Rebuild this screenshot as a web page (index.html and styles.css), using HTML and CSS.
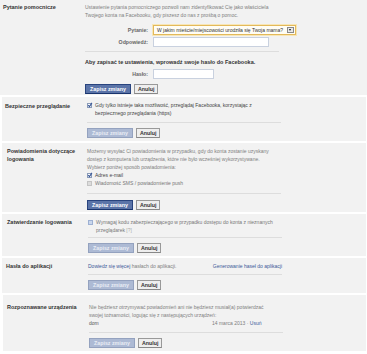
FILE: index.html
```html
<!DOCTYPE html>
<html lang="pl">
<head>
<meta charset="utf-8">
<title>Zabezpieczenia</title>
<link rel="stylesheet" href="styles.css">
</head>
<body>
<div class="page">

  <section class="block b1">
    <div class="title">Pytanie pomocnicze</div>
    <div class="content">
      <p class="desc">Ustawienie pytania pomocniczego pozwoli nam zidentyfikować Cię jako właściciela Twojego konta na Facebooku, gdy piszesz do nas z prośbą o pomoc.</p>
      <div class="form-row r-select">
        <span class="flabel">Pytanie:</span>
        <span class="select">W jakim mieście/miejscowości urodziła się Twoja mama?<span class="arrow"></span></span>
      </div>
      <div class="form-row r-answer">
        <span class="flabel">Odpowiedź:</span>
        <span class="input w-answer"></span>
      </div>
      <div class="sep s-first"></div>
      <p class="notice">Aby zapisać te ustawienia, wprowadź swoje hasło do Facebooka.</p>
      <div class="form-row r-pass">
        <span class="flabel">Hasło:</span>
        <span class="input w-pass"></span>
      </div>
      <div class="buttons">
        <span class="btn primary">Zapisz zmiany</span>
        <span class="btn cancel">Anuluj</span>
      </div>
    </div>
  </section>

  <section class="block b2">
    <div class="title">Bezpieczne przeglądanie</div>
    <div class="content">
      <div class="check">
        <span class="box checked"><svg viewBox="0 0 6 6" width="6" height="6"><path d="M1.2 3.1 L2.5 4.6 L4.9 0.9" fill="none" stroke="#3b5998" stroke-width="1.1"/></svg></span>
        <span class="ctext dark">Gdy tylko istnieje taka możliwość, przeglądaj Facebooka, korzystając z bezpiecznego przeglądania (https)</span>
      </div>
      <div class="sep"></div>
      <div class="buttons">
        <span class="btn primary disabled">Zapisz zmiany</span>
        <span class="btn cancel">Anuluj</span>
      </div>
    </div>
  </section>

  <section class="block b3">
    <div class="title">Powiadomienia dotyczące logowania</div>
    <div class="content">
      <p class="desc">Możemy wysyłać Ci powiadomienia w przypadku, gdy do konta zostanie uzyskany dostęp z komputera lub urządzenia, które nie było wcześniej wykorzystywane.</p>
      <p class="desc">Wybierz poniżej sposób powiadomienia:</p>
      <div class="check">
        <span class="box checked"><svg viewBox="0 0 6 6" width="6" height="6"><path d="M1.2 3.1 L2.5 4.6 L4.9 0.9" fill="none" stroke="#3b5998" stroke-width="1.1"/></svg></span>
        <span class="ctext dark">Adres e-mail</span>
      </div>
      <div class="check">
        <span class="box grey"></span>
        <span class="ctext">Wiadomość SMS / powiadomienie push</span>
      </div>
      <div class="sep"></div>
      <div class="buttons">
        <span class="btn primary">Zapisz zmiany</span>
        <span class="btn cancel">Anuluj</span>
      </div>
    </div>
  </section>

  <section class="block b4">
    <div class="title">Zatwierdzanie logowania</div>
    <div class="content">
      <div class="check">
        <span class="box blue"></span>
        <span class="ctext">Wymagaj kodu zabezpieczającego w przypadku dostępu do konta z nieznanych przeglądarek <span class="help">[?]</span></span>
      </div>
      <div class="sep"></div>
      <div class="buttons">
        <span class="btn primary disabled">Zapisz zmiany</span>
        <span class="btn cancel">Anuluj</span>
      </div>
    </div>
  </section>

  <section class="block b5">
    <div class="title">Hasła do aplikacji</div>
    <div class="content">
      <div class="split">
        <span class="desc-inline"><a class="link">Dowiedz się więcej</a> hasłach do aplikacji.</span>
        <a class="link">Generowanie haseł do aplikacji</a>
      </div>
      <div class="sep"></div>
      <div class="buttons">
        <span class="btn primary disabled">Zapisz zmiany</span>
        <span class="btn cancel">Anuluj</span>
      </div>
    </div>
  </section>

  <section class="block b6">
    <div class="title">Rozpoznawane urządzenia</div>
    <div class="content">
      <p class="desc">Nie będziesz otrzymywać powiadomień ani nie będziesz musiał(a) potwierdzać<br>swojej tożsamości, logując się z następujących urządzeń:</p>
      <div class="device">
        <span class="dname">dom</span>
        <span class="ddate">14 marca 2013 · <a class="link">Usuń</a></span>
      </div>
      <div class="sep"></div>
      <div class="buttons">
        <span class="btn primary disabled">Zapisz zmiany</span>
        <span class="btn cancel">Anuluj</span>
      </div>
    </div>
  </section>

</div>
</body>
</html>
```

FILE: styles.css
```css
* { box-sizing: border-box; }

html, body {
  margin: 0;
  padding: 0;
  background: #ffffff;
}

body {
  font-family: "Liberation Sans", Arial, sans-serif;
  font-size: 5px;
  line-height: 8px;
  color: #333333;
  width: 367px;
  height: 354px;
  overflow: hidden;
}

p { margin: 0; }

.page {
  display: flex;
  flex-direction: column;
  gap: 2px;
}

.block {
  display: flex;
  background: #f2f2f2;
  padding: 4px 0 3px 0;
  margin-left: 2px;
  margin-right: 1px;
}

.title {
  font-weight: bold;
  font-size: 5.5px;
  color: #333333;
  flex: 0 0 auto;
}

.content {
  width: 194px;
  flex: 0 0 auto;
}

.b1 { margin-left: 0; margin-right: 0; padding: 3px 0 1px 0; }
.b1 .title { width: 85px; padding-left: 3px; }
.b2 .title { width: 85px; padding-left: 3px; padding-top: 1px; }
.b3 { padding-bottom: 2px; }
.b3 .title { width: 85px; padding-left: 5px; padding-right: 8px; }
.b3 .sep { margin-top: 6px; }
.b3 .buttons { margin-top: 6px; }
.b4 .title { width: 86px; padding-left: 5px; }
.b4 .sep { margin-top: 3px; }
.b5 .title { width: 86px; padding-left: 4px; }
.b5 .sep { margin-top: 4px; }
.b6 { padding-top: 8px; margin-left: 3px; }
.b6 .title { width: 86px; padding-left: 4px; }

.desc { color: #808080; }
.desc-inline { color: #808080; }

.link { color: #3b5998; text-decoration: none; }

.form-row {
  display: flex;
  align-items: center;
  gap: 5px;
}

.flabel {
  width: 63px;
  text-align: right;
  font-weight: bold;
  font-size: 5.2px;
  color: #666666;
  flex: 0 0 auto;
}

.r-select { margin-top: 6px; height: 10px; }
.r-answer { margin-top: 2px; height: 10px; }
.r-pass { margin-top: 3px; height: 10px; }

.select {
  position: relative;
  flex: 0 0 auto;
  width: 143px;
  height: 10px;
  border: 1px solid #e3b95a;
  box-shadow: 0 0 0 1px #f7e6b8;
  background: #fffdf5;
  color: #333333;
  line-height: 8px;
  padding-left: 3px;
  white-space: nowrap;
  overflow: hidden;
}

.arrow {
  position: absolute;
  right: 1px;
  top: 1px;
  width: 7px;
  height: 6px;
  border: 1px solid #8a8a8a;
  background: #e8e8e8;
}

.arrow::after {
  content: "";
  position: absolute;
  left: 1px;
  top: 1px;
  border-left: 1.5px solid transparent;
  border-right: 1.5px solid transparent;
  border-top: 2px solid #111111;
}

.input {
  display: block;
  flex: 0 0 auto;
  height: 100%;
  background: #ffffff;
  border: 1px solid #c9d1df;
}

.w-answer { width: 116px; }
.w-pass { width: 61px; }

.sep {
  border-top: 1px solid #dddddd;
  margin-top: 5px;
}

.s-first { margin-top: 4px; margin-left: 0; }

.notice {
  font-weight: bold;
  font-size: 5.5px;
  color: #333333;
  margin-top: 6px;
  white-space: nowrap;
}

.buttons {
  display: flex;
  gap: 3px;
  margin-top: 5px;
}

.btn {
  display: inline-block;
  height: 10px;
  line-height: 8px;
  padding: 0 4px;
  font-weight: bold;
  font-size: 5.3px;
  border: 1px solid;
  white-space: nowrap;
}

.primary {
  background: #5b74a8;
  border-color: #29447e #29447e #1a356e;
  color: #ffffff;
}

.primary.disabled {
  background: #adbad4;
  border-color: #94a2bf;
  color: #e9edf4;
}

.cancel {
  background: #eeeeee;
  border-color: #999999 #999999 #888888;
  color: #333333;
  padding: 0 3px;
}

.check {
  display: flex;
  align-items: flex-start;
  gap: 3px;
}

.box {
  flex: 0 0 auto;
  width: 5px;
  height: 5px;
  margin-top: 1.5px;
  border: 1px solid #8a9bb8;
  background: #ffffff;
  position: relative;
}

.box svg {
  position: absolute;
  left: -1px;
  top: -2px;
}

.box.grey { background: #dcdcdc; border-color: #c4c4c4; }
.box.blue { background: #c9d6ec; border-color: #9db0d3; }

.ctext { color: #777777; }
.ctext.dark { color: #444444; }

.help { color: #aaaaaa; }

.split {
  display: flex;
  justify-content: space-between;
}

.device {
  display: flex;
}

.dname {
  width: 123px;
  color: #555555;
}

.ddate { color: #808080; }
```
